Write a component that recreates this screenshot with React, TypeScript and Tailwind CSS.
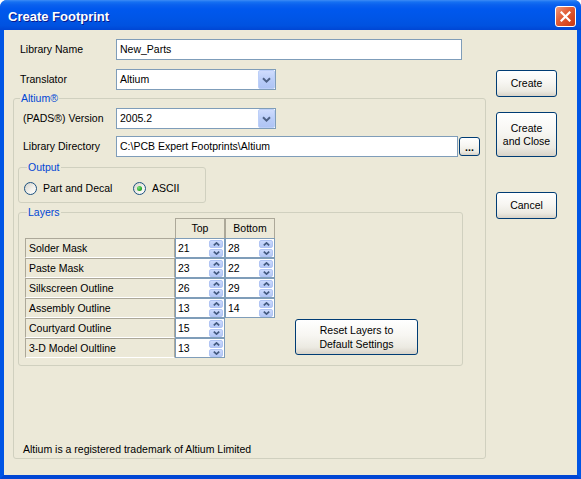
import React from "react";

function Chevron() {
  return (
    <svg width="9" height="6" viewBox="0 0 9 6">
      <path d="M1 1.2 L4.5 4.6 L8 1.2" fill="none" stroke="#4D6185" strokeWidth="2" />
    </svg>
  );
}

function Combo({ value, className }: { value: string; className: string }) {
  return (
    <div className={`flex h-[21px] items-stretch border border-[#7F9DB9] bg-white ${className}`}>
      <div className="flex flex-1 items-center pl-[3px]">{value}</div>
      <div className="flex w-[17px] items-center justify-center rounded-[2px] border border-[#BCCFF8] bg-[linear-gradient(to_bottom,#CFDCFD,#B7CBF7_60%,#AFC4F4)]">
        <Chevron />
      </div>
    </div>
  );
}

function SpinHalf({ up }: { up: boolean }) {
  return (
    <div className="flex h-[8px] items-center justify-center rounded-[2px] border border-[#B0C4F4] bg-[linear-gradient(to_bottom,#CCDAFD,#B4C8F6)]">
      <svg width="7" height="4" viewBox="0 0 7 4">
        <path
          d={up ? "M0.8 3.4 L3.5 0.9 L6.2 3.4" : "M0.8 0.6 L3.5 3.1 L6.2 0.6"}
          fill="none"
          stroke="#445A80"
          strokeWidth="1.7"
        />
      </svg>
    </div>
  );
}

function Spin({ v }: { v: string }) {
  return (
    <div className="flex h-[20px] w-[50px] border border-[#7F9DB9] bg-white">
      <div className="flex flex-1 items-center pl-[2px]">{v}</div>
      <div className="flex w-[15px] flex-col justify-center gap-px pr-px">
        <SpinHalf up={true} />
        <SpinHalf up={false} />
      </div>
    </div>
  );
}

function XPButton({ children, className }: { children: React.ReactNode; className: string }) {
  return (
    <div
      className={`flex items-center justify-center rounded-[3px] border border-[#003C74] bg-[linear-gradient(to_bottom,#FFFFFF_0%,#F7F6F2_45%,#ECEAE2_80%,#D8D3C8_100%)] text-center ${className}`}
    >
      {children}
    </div>
  );
}

function Radio({ checked }: { checked: boolean }) {
  return (
    <div className="flex h-[13px] w-[13px] shrink-0 items-center justify-center rounded-full border border-[#1C5180] bg-[linear-gradient(135deg,#D4D2C8,#F4F3EE_60%,#FFFFFF)]">
      {checked && <div className="h-[5px] w-[5px] rounded-full bg-[radial-gradient(circle_at_35%_35%,#7BE07B,#21A121_70%,#168716)]" />}
    </div>
  );
}

function LabelCell({ text }: { text: string }) {
  return (
    <div className="flex h-[20px] items-center border-b border-l border-r border-t border-b-white border-l-[#ACA899] border-r-[#ACA899] border-t-[#ACA899] pl-[3px]">
      {text}
    </div>
  );
}

function HeadCell({ text }: { text: string }) {
  return (
    <div className="flex h-[20px] items-center justify-center border-l border-r border-t border-[#ACA899] text-center">
      {text}
    </div>
  );
}

export default function App() {
  const rows: [string, string, string | null][] = [
    ["Solder Mask", "21", "28"],
    ["Paste Mask", "23", "22"],
    ["Silkscreen Outline", "26", "29"],
    ["Assembly Outline", "13", "14"],
    ["Courtyard Outline", "15", null],
    ["3-D Model Oultline", "13", null],
  ];
  return (
    <div className="h-[479px] w-[581px] bg-white font-['Liberation_Sans',Arial,sans-serif] text-[10.5px] leading-[13px] text-black">
      <div className="flex h-full flex-col overflow-hidden rounded-t-[7px] bg-[#0055E5]">
        <div className="flex h-[30px] shrink-0 items-center bg-[linear-gradient(to_bottom,#3D8CF5_0px,#1570F2_2px,#0A60EE_5px,#0058EE_9px,#0056E8_55%,#0052E0_85%,#0046D4_100%)] pl-[8px] pr-[5px]">
          <span className="mt-[3px] text-[13px] font-bold text-white [text-shadow:1px_1px_0_#0A1A8C]">
            Create Footprint
          </span>
          <div className="ml-auto mt-[3px] flex h-[21px] w-[21px] items-center justify-center rounded-[3px] border border-white bg-[linear-gradient(135deg,#F09A7C,#E2603A_40%,#D6461E_75%,#C23A18)]">
            <svg width="11" height="11" viewBox="0 0 11 11">
              <path d="M1.5 1.5 L9.5 9.5 M9.5 1.5 L1.5 9.5" stroke="white" strokeWidth="2.2" strokeLinecap="square" />
            </svg>
          </div>
        </div>
        <div className="flex flex-1 border-x-[4px] border-b-[4px] border-x-[#0055E5] border-b-[#0046D4]">
          <div className="flex flex-1 bg-[#ECE9D8]">
            <div className="flex w-[488px] flex-col">
              <div className="ml-[16px] mt-[9px] flex h-[21px] items-center">
                <span className="w-[96px]">Library Name</span>
                <div className="flex h-[21px] w-[346px] items-center border border-[#7F9DB9] bg-white pl-[3px]">
                  New_Parts
                </div>
              </div>
              <div className="ml-[16px] mt-[9px] flex h-[21px] items-center">
                <span className="w-[96px]">Translator</span>
                <Combo value="Altium" className="w-[160px]" />
              </div>
              <fieldset className="ml-[9px] mt-[2px] h-[367px] w-[473px] rounded-[3px] border border-[#D0D0BF]">
                <legend className="ml-[6px] px-[1px] text-[#0046D5]">Altium®</legend>
                <div className="ml-[9px] mt-[3px] flex h-[21px] items-center">
                  <span className="w-[93px]">(PADS®) Version</span>
                  <Combo value="2005.2" className="w-[160px]" />
                </div>
                <div className="ml-[9px] mt-[7px] flex h-[21px] items-center">
                  <span className="w-[93px]">Library Directory</span>
                  <div className="flex h-[21px] w-[342px] items-center border border-[#7F9DB9] bg-white pl-[3px]">
                    {"C:\\PCB Expert Footprints\\Altium"}
                  </div>
                  <XPButton className="ml-px h-[19px] w-[21px] font-bold leading-[10px]">...</XPButton>
                </div>
                <fieldset className="ml-[4px] mt-[4px] h-[42px] w-[188px] rounded-[3px] border border-[#D0D0BF]">
                  <legend className="ml-[8px] px-[1px] text-[#0046D5]">Output</legend>
                  <div className="flex h-[28px] items-center pl-[5px]">
                    <div className="flex w-[109px] items-center gap-[6px]">
                      <Radio checked={false} />
                      <span>Part and Decal</span>
                    </div>
                    <div className="flex items-center gap-[6px]">
                      <Radio checked={true} />
                      <span>ASCII</span>
                    </div>
                  </div>
                </fieldset>
                <fieldset className="ml-[4px] mt-[3px] h-[160px] w-[445px] rounded-[3px] border border-[#D0D0BF]">
                  <legend className="ml-[8px] px-[1px] text-[#0046D5]">Layers</legend>
                  <div className="ml-[6px] mt-[-1px] flex items-end">
                    <div className="grid grid-cols-[150px_50px_50px]">
                      <div />
                      <HeadCell text="Top" />
                      <HeadCell text="Bottom" />
                      {rows.map(([label, top, bottom]) => (
                        <React.Fragment key={label}>
                          <LabelCell text={label} />
                          <Spin v={top} />
                          {bottom !== null ? <Spin v={bottom} /> : <div />}
                        </React.Fragment>
                      ))}
                    </div>
                    <XPButton className="mb-[3px] ml-[20px] h-[36px] w-[123px] leading-[14px]">
                      Reset Layers to
                      <br />
                      Default Settings
                    </XPButton>
                  </div>
                </fieldset>
                <div className="ml-[9px] mt-[77px]">Altium is a registered trademark of Altium Limited</div>
              </fieldset>
            </div>
            <div className="ml-[4px] flex flex-col pt-[40px]">
              <XPButton className="h-[27px] w-[61px]">Create</XPButton>
              <XPButton className="mt-[15px] h-[45px] w-[61px] leading-[13px]">
                Create
                <br />
                and Close
              </XPButton>
              <XPButton className="mt-[35px] h-[27px] w-[61px]">Cancel</XPButton>
            </div>
          </div>
        </div>
      </div>
    </div>
  );
}
